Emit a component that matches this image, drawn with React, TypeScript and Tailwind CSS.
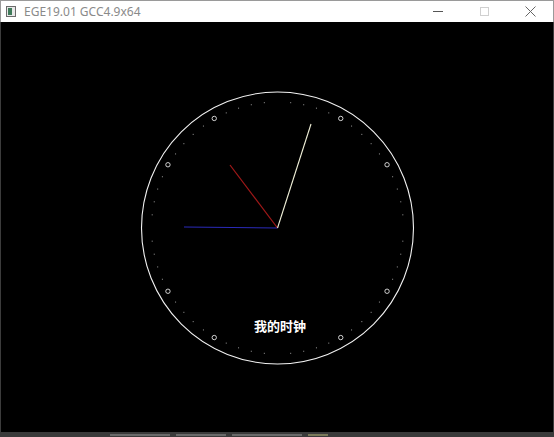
const CX = 277.5;
const CY = 228;

function Clock() {
  const ticks = [];
  for (let i = 0; i < 60; i++) {
    const a = (i * Math.PI) / 30;
    if (i % 5 === 0) {
      if (i % 15 === 0) continue;
      ticks.push(
        <circle
          key={i}
          cx={CX + 126.5 * Math.sin(a)}
          cy={CY - 126.5 * Math.cos(a)}
          r={2.2}
          fill="none"
          stroke="#e5e5e5"
          strokeWidth={0.9}
        />
      );
    } else {
      ticks.push(
        <rect
          key={i}
          x={CX + 126 * Math.sin(a) - 0.5}
          y={CY - 126 * Math.cos(a) - 0.5}
          width={1}
          height={1}
          fill="#9a9a9a"
        />
      );
    }
  }

  return (
    <svg width={554} height={437} viewBox="0 0 554 437" className="block">
      <circle cx={CX} cy={CY} r={136} fill="none" stroke="#f2f2f2" strokeWidth={1.1} />
      {ticks}
      <line x1={CX} y1={CY} x2={184} y2={227} stroke="#2a2ab8" strokeWidth={1.2} />
      <line x1={CX} y1={CY} x2={230} y2={165} stroke="#a01818" strokeWidth={1.2} />
      <line x1={CX} y1={CY} x2={311} y2={124} stroke="#f0f0d8" strokeWidth={1.1} />
      <text
        x={280}
        y={331}
        textAnchor="middle"
        fill="#ffffff"
        fontSize={13}
        fontWeight={700}
        fontFamily='"Noto Sans CJK SC", sans-serif'
      >
        我的时钟
      </text>
    </svg>
  );
}

export default function App() {
  return (
    <div className="relative flex h-[437px] w-[554px] flex-col overflow-hidden bg-black" style={{ fontFamily: '"Noto Sans", sans-serif' }}>
      <div className="flex h-[22px] items-center border-t border-l border-r border-[#9a9a9a] bg-white">
        <div className="ml-[5px] flex h-[11px] w-[10px] items-center justify-start border border-[#6b6b6b] bg-[#e8e8e8]">
          <div className="ml-[1px] h-[7px] w-[4px] bg-[#3f7a5a]" />
        </div>
        <span className="ml-[8px] text-[12px] leading-none text-[#8a8a8a]">EGE19.01 GCC4.9x64</span>
        <div className="ml-auto flex items-center">
          <div className="flex w-[46px] justify-center">
            <div className="h-px w-[10px] bg-[#555]" />
          </div>
          <div className="flex w-[46px] justify-center">
            <div className="h-[9px] w-[9px] border border-[#d0d0d0]" />
          </div>
          <div className="flex w-[46px] justify-center">
            <svg width="11" height="11" viewBox="0 0 11 11">
              <path d="M0.5 0.5 L10.5 10.5 M10.5 0.5 L0.5 10.5" stroke="#666" strokeWidth="1" />
            </svg>
          </div>
        </div>
      </div>
      <div className="relative flex-1 border-l border-r border-[#3c3c3c]">
        <div className="absolute left-[-1px] top-[-22px]">
          <Clock />
        </div>
      </div>
      <div className="flex h-[5px] items-center gap-[6px] bg-[#3a3a3a] pl-[110px]">
        <div className="h-[2px] w-[60px] bg-[#6a6a6a]" />
        <div className="h-[2px] w-[50px] bg-[#6a6a6a]" />
        <div className="h-[2px] w-[70px] bg-[#6a6a6a]" />
        <div className="h-[2px] w-[20px] bg-[#7a7a5a]" />
      </div>
    </div>
  );
}
